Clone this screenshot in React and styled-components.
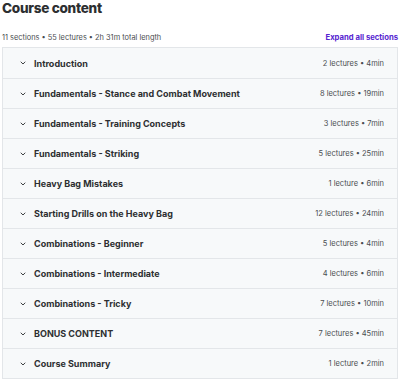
import React from 'react';
import styled, { createGlobalStyle } from 'styled-components';

const GlobalStyle = createGlobalStyle`
  html, body {
    margin: 0;
    padding: 0;
    background: #fff;
  }
  body {
    font-family: Inter, "Noto Sans", sans-serif;
    color: #2d2f31;
  }
`;

const StyledPage = styled.div`
  width: 400px;
  height: 380px;
  overflow: hidden;
  padding: 0 2px 0 2px;
  box-sizing: border-box;
`;

const StyledTitle = styled.h2`
  margin: 0;
  padding-top: 1px;
  font-size: 13.6px;
  line-height: 14px;
  font-weight: 800;
  letter-spacing: -0.3px;
`;

const StyledMetaBar = styled.div`
  display: flex;
  justify-content: space-between;
  align-items: center;
  height: 14px;
  margin-top: 15px;
  margin-bottom: 3px;
`;

const StyledMeta = styled.span`
  font-size: 7.4px;
  color: #4a4d50;
`;

const StyledExpand = styled.span`
  color: #5624d0;
  font-weight: 700;
  font-size: 7.7px;
`;

const StyledList = styled.div`
  border: 1px solid #e3e6e9;
`;

const StyledRow = styled.div`
  display: flex;
  align-items: center;
  height: 30px;
  box-sizing: border-box;
  padding: 0 13px 0 16px;
  background: #f7f9fa;
  border-top: ${({ first }) => (first ? 'none' : '1px solid #e3e6e9')};
`;

const StyledChevron = styled.svg`
  width: 8px;
  height: 8px;
  margin-right: 7px;
  flex-shrink: 0;
`;

const StyledSectionTitle = styled.span`
  flex: 1;
  font-size: 9px;
  font-weight: 700;
`;

const StyledSectionMeta = styled.span`
  font-size: 7.5px;
  color: #4a4d50;
`;

const sections = [
  ['Introduction', '2 lectures • 4min'],
  ['Fundamentals - Stance and Combat Movement', '8 lectures • 19min'],
  ['Fundamentals - Training Concepts', '3 lectures • 7min'],
  ['Fundamentals - Striking', '5 lectures • 25min'],
  ['Heavy Bag Mistakes', '1 lecture • 6min'],
  ['Starting Drills on the Heavy Bag', '12 lectures • 24min'],
  ['Combinations - Beginner', '5 lectures • 4min'],
  ['Combinations - Intermediate', '4 lectures • 6min'],
  ['Combinations - Tricky', '7 lectures • 10min'],
  ['BONUS CONTENT', '7 lectures • 45min'],
  ['Course Summary', '1 lecture • 2min'],
];

const Chevron = () => (
  <StyledChevron viewBox="0 0 8 8">
    <path d="M2 3l2 2 2-2" fill="none" stroke="#3e4143" strokeWidth="1" strokeLinecap="round" strokeLinejoin="round" />
  </StyledChevron>
);

const App = () => (
  <StyledPage>
    <GlobalStyle />
    <StyledTitle>Course content</StyledTitle>
    <StyledMetaBar>
      <StyledMeta>11 sections • 55 lectures • 2h 31m total length</StyledMeta>
      <StyledExpand>Expand all sections</StyledExpand>
    </StyledMetaBar>
    <StyledList>
      {sections.map(([title, meta], i) => (
        <StyledRow key={title} first={i === 0}>
          <Chevron />
          <StyledSectionTitle>{title}</StyledSectionTitle>
          <StyledSectionMeta>{meta}</StyledSectionMeta>
        </StyledRow>
      ))}
    </StyledList>
  </StyledPage>
);

export default App;
